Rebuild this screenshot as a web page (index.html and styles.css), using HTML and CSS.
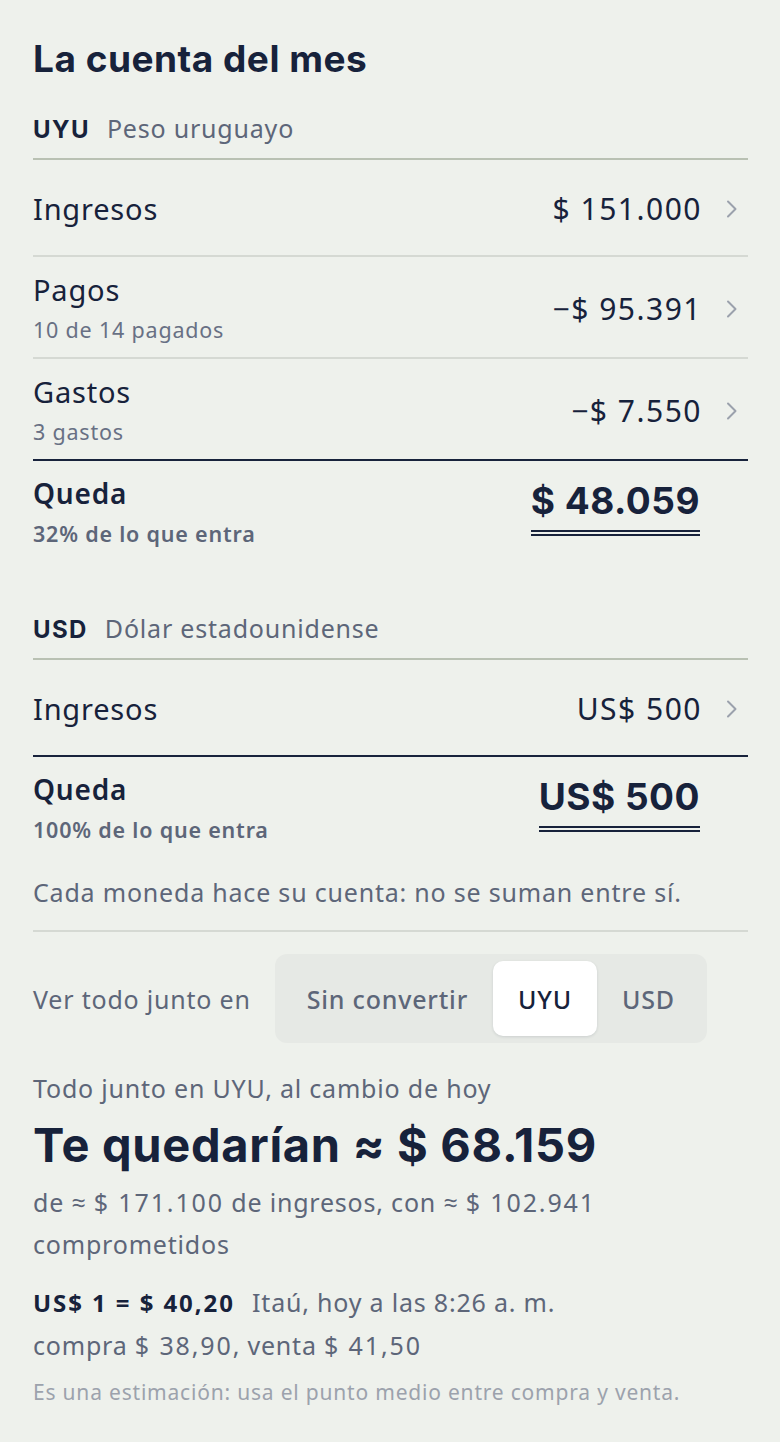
FILE: index.html
```html
<!DOCTYPE html>
<html lang="es">
<head>
<meta charset="utf-8">
<title>La cuenta del mes</title>
<link rel="stylesheet" href="styles.css">
</head>
<body>
<main class="page">
  <h1 class="title">La cuenta del mes</h1>

  <section class="currency">
    <div class="cur-head"><span class="code">UYU</span><span class="cur-name">Peso uruguayo</span></div>
    <ul class="rows">
      <li class="row">
        <div class="row-text"><span class="row-label">Ingresos</span></div>
        <span class="amount">$ 151.000</span>
        <svg class="chev" viewBox="0 0 12 20" width="12" height="20"><path d="M2 2.5 L9.5 10 L2 17.5"/></svg>
      </li>
      <li class="row">
        <div class="row-text"><span class="row-label">Pagos</span><span class="row-sub">10 de 14 pagados</span></div>
        <span class="amount">−$ 95.391</span>
        <svg class="chev" viewBox="0 0 12 20" width="12" height="20"><path d="M2 2.5 L9.5 10 L2 17.5"/></svg>
      </li>
      <li class="row">
        <div class="row-text"><span class="row-label">Gastos</span><span class="row-sub">3 gastos</span></div>
        <span class="amount">−$ 7.550</span>
        <svg class="chev" viewBox="0 0 12 20" width="12" height="20"><path d="M2 2.5 L9.5 10 L2 17.5"/></svg>
      </li>
    </ul>
    <div class="total">
      <div class="total-text"><span class="total-label">Queda</span><span class="total-sub">32% de lo que entra</span></div>
      <span class="total-amount">$ 48.059</span>
      <span class="chev-space"></span>
    </div>
  </section>

  <section class="currency second">
    <div class="cur-head"><span class="code">USD</span><span class="cur-name">Dólar estadounidense</span></div>
    <ul class="rows">
      <li class="row">
        <div class="row-text"><span class="row-label">Ingresos</span></div>
        <span class="amount">US$ 500</span>
        <svg class="chev" viewBox="0 0 12 20" width="12" height="20"><path d="M2 2.5 L9.5 10 L2 17.5"/></svg>
      </li>
    </ul>
    <div class="total">
      <div class="total-text"><span class="total-label">Queda</span><span class="total-sub">100% de lo que entra</span></div>
      <span class="total-amount">US$ 500</span>
      <span class="chev-space"></span>
    </div>
  </section>

  <p class="note">Cada moneda hace su cuenta: no se suman entre sí.</p>

  <div class="convert">
    <span class="convert-label">Ver todo junto en</span>
    <div class="segmented">
      <span class="seg">Sin convertir</span>
      <span class="seg active">UYU</span>
      <span class="seg">USD</span>
    </div>
  </div>

  <section class="joint">
    <p class="joint-caption">Todo junto en UYU, al cambio de hoy</p>
    <p class="joint-total">Te quedarían ≈ $ 68.159</p>
    <p class="joint-detail">de ≈ <span class="num">$ 171.100</span> de ingresos, con ≈ <span class="num">$ 102.941</span> comprometidos</p>
    <p class="rate"><strong class="rate-value">US$ 1 = $ 40,20</strong> Itaú, hoy a las 8:26 a. m.<br>compra <span class="num">$ 38,90</span>, venta <span class="num">$ 41,50</span></p>
    <p class="disclaimer">Es una estimación: usa el punto medio entre compra y venta.</p>
  </section>
</main>
</body>
</html>
```

FILE: styles.css
```css
* { box-sizing: border-box; }

html, body {
  margin: 0;
  padding: 0;
  background: #eef1ec;
}

body {
  font-family: "Noto Sans", "Open Sans", sans-serif;
  letter-spacing: 0.05em;
  color: #17223b;
}

.page {
  padding: 37px 32px 40px 33px;
}

.title {
  margin: 0;
  font-family: Inter, "Liberation Sans", sans-serif;
  font-weight: 700;
  font-size: 37px;
  line-height: 43px;
  letter-spacing: 0.5px;
  color: #17223b;
}

.currency { margin-top: 33px; }
.currency.second { margin-top: 65px; }

.cur-head {
  display: flex;
  align-items: baseline;
  gap: 17px;
  padding-bottom: 13px;
  border-bottom: 2px solid #b9c1b3;
  line-height: 30px;
}

.code {
  font-family: Inter, "Liberation Sans", sans-serif;
  font-weight: 700;
  font-size: 24px;
  letter-spacing: 1.4px;
  color: #17223b;
}

.cur-name {
  font-size: 25px;
  color: #5d6679;
}

.rows {
  list-style: none;
  margin: 0;
  padding: 0;
}

.row {
  display: flex;
  align-items: center;
  min-height: 97px;
  padding: 16px 0 13px;
  border-bottom: 2px solid #d5d9d3;
}

.row:last-child { border-bottom: 2px solid #18233c; }

.row-text {
  flex: 1;
  display: flex;
  flex-direction: column;
}

.row-label {
  font-size: 29px;
  line-height: 34px;
  color: #17223b;
}

.row-sub {
  margin-top: 9px;
  font-size: 21.5px;
  line-height: 28px;
  color: #687084;
}

.amount {
  font-size: 30px;
  line-height: 34px;
  letter-spacing: 0.05em;
  color: #17223b;
}

.chev {
  margin-left: 24px;
  margin-right: 10px;
  fill: none;
  stroke: #9ba1ac;
  stroke-width: 2;
  stroke-linecap: round;
  stroke-linejoin: round;
}

.chev-space {
  width: 48px;
  flex: none;
}

.total {
  display: flex;
  align-items: flex-start;
  padding-top: 15px;
}

.total-text {
  flex: 1;
  display: flex;
  flex-direction: column;
}

.total-label {
  font-weight: 600;
  font-size: 28px;
  line-height: 34px;
  color: #17223b;
}

.total-sub {
  margin-top: 10px;
  font-weight: 600;
  font-size: 21.5px;
  line-height: 28px;
  color: #5d6679;
}

.total-amount {
  margin-top: 3px;
  font-family: Inter, "Liberation Sans", sans-serif;
  font-weight: 700;
  font-size: 37px;
  line-height: 44px;
  letter-spacing: 0.5px;
  color: #17223b;
  padding-bottom: 7px;
  border-bottom: 6px double #17223b;
}

.note {
  margin: 33px 0 0;
  padding-bottom: 23px;
  border-bottom: 2px solid #d5d9d3;
  font-size: 25px;
  line-height: 30px;
  color: #5d6679;
}

.convert {
  display: flex;
  align-items: center;
  gap: 24px;
  margin-top: 22px;
}

.convert-label {
  font-size: 25px;
  color: #5d6679;
}

.segmented {
  display: flex;
  align-items: stretch;
  padding: 7px;
  border-radius: 12px;
  background: #e6e9e5;
}

.seg {
  display: flex;
  align-items: center;
  height: 75px;
  padding: 0 25px;
  border-radius: 10px;
  font-size: 25px;
  font-weight: 500;
  color: #5d6679;
}

.seg.active {
  background: #ffffff;
  color: #17223b;
  box-shadow: 0 1px 3px rgba(20, 30, 50, 0.12);
}

.joint { margin-top: 30px; }

.joint p { margin: 0; }

.joint-caption {
  font-size: 25px;
  line-height: 30px;
  color: #5d6679;
}

.joint-total {
  margin-top: 14px !important;
  font-family: Inter, "Liberation Sans", sans-serif;
  font-weight: 700;
  font-size: 47px;
  line-height: 56px;
  letter-spacing: 0.7px;
  color: #17223b;
}

.joint-detail {
  margin-top: 8px !important;
  font-size: 25px;
  line-height: 42px;
  color: #5d6679;
  max-width: 640px;
}

.num { letter-spacing: 0.075em; }

.rate {
  margin-top: 16px !important;
  font-size: 25px;
  line-height: 42px;
  color: #5d6679;
}

.rate-value {
  font-weight: 700;
  font-size: 24px;
  letter-spacing: 0.08em;
  color: #17223b;
  margin-right: 10px;
}

.disclaimer {
  margin-top: 12px !important;
  font-size: 21px;
  line-height: 28px;
  color: #9ca2ac;
}
```
